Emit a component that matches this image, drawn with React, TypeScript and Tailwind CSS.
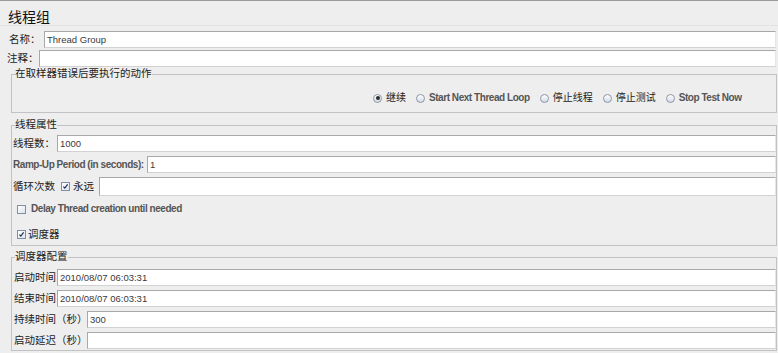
import React from "react";

const FONT = "font-['Liberation_Sans','Noto_Sans_CJK_SC',sans-serif]";
const CJK = "text-[10.5px] text-[#222] leading-none whitespace-nowrap";
const EN = "text-[10px] font-bold tracking-[-0.45px] text-[#555] leading-none whitespace-nowrap";

function Field({ value = "", h = "h-[17px]" }: { value?: string; h?: string }) {
  return (
    <div
      className={`${h} flex-1 min-w-0 bg-white border border-[#a8a8a8] border-b-[#d2d2d2] border-r-[#e6e6e6] flex items-center pl-[2px] text-[9.5px] text-[#3a3a3a] leading-none whitespace-nowrap overflow-hidden`}
    >
      {value}
    </div>
  );
}

function Radio({ checked = false, label, en = false }: { checked?: boolean; label: string; en?: boolean }) {
  return (
    <div className="flex items-center gap-[4px]">
      <span className="w-[9px] h-[9px] rounded-full border border-[#8d97a5] bg-linear-to-b from-white to-[#d3dbe7] flex items-center justify-center">
        {checked && <span className="w-[4px] h-[4px] rounded-full bg-[#2b2b2b]" />}
      </span>
      <span className={en ? `${EN} text-[#333]` : "text-[10px] text-[#222] leading-none whitespace-nowrap"}>{label}</span>
    </div>
  );
}

function Check({ checked = false }: { checked?: boolean }) {
  return (
    <span className="w-[9px] h-[9px] shrink-0 border border-[#7f8fa4] bg-linear-to-br from-white to-[#dbe3ee] flex items-center justify-center">
      {checked && (
        <svg width="9" height="9" viewBox="0 0 9 9">
          <path d="M1.8 4.6 L3.6 6.6 L7.2 1.8" fill="none" stroke="#1e2d4d" strokeWidth="1.5" />
        </svg>
      )}
    </span>
  );
}

function Group({ title, className, children }: { title: string; className: string; children: React.ReactNode }) {
  return (
    <fieldset className={`ml-[11px] mr-[1px] border border-[#c2c2c2] ${className}`}>
      <legend className={`ml-[3px] ${CJK} leading-[12px] h-[12px]`}>{title}</legend>
      {children}
    </fieldset>
  );
}

export default function App() {
  return (
    <div className={`w-[778px] h-[353px] overflow-hidden bg-[#eeeeee] border-t border-[#9a9a9a] ${FONT} flex flex-col`}>
      <div className="h-[25px] pt-[8px] pl-[8px] border-b border-[#e2e2e2] text-[14px] leading-[16px] text-[#111]">
        线程组
      </div>

      <div className="mt-[5px] flex items-center pl-[9px] mr-[2px]">
        <span className={`${CJK} w-[35px]`}>名称：</span>
        <Field value="Thread Group" />
      </div>
      <div className="mt-[2px] flex items-center pl-[7px] mr-[2px]">
        <span className={`${CJK} w-[32px]`}>注释：</span>
        <Field />
      </div>

      <Group title="在取样器错误后要执行的动作" className="mt-[1px] h-[45px] pb-[8px]">
        <div className="mt-[12px] h-[12px] flex items-center pl-[361px] gap-[10px]">
          <Radio checked label="继续" />
          <Radio label="Start Next Thread Loop" en />
          <Radio label="停止线程" />
          <Radio label="停止测试" />
          <Radio label="Stop Test Now" en />
        </div>
      </Group>

      <Group title="线程属性" className="mt-[6px] h-[127px]">
        <div className="mt-[4px] flex items-center pl-[1px]">
          <span className={`${CJK} w-[44px]`}>线程数：</span>
          <Field value="1000" />
        </div>
        <div className="mt-[4px] flex items-center pl-[1px]">
          <span className={`${EN} w-[134px]`}>Ramp-Up Period (in seconds):</span>
          <Field value="1" />
        </div>
        <div className="mt-[4px] flex items-center pl-[1px]">
          <span className={`${CJK} w-[48px]`}>循环次数</span>
          <Check checked />
          <span className={`${CJK} ml-[3px] w-[26px]`}>永远</span>
          <Field h="h-[19px]" />
        </div>
        <div className="mt-[6px] h-[14px] flex items-center pl-[5px] gap-[5px]">
          <Check />
          <span className={EN}>Delay Thread creation until needed</span>
        </div>
        <div className="mt-[11px] h-[14px] flex items-center pl-[5px] gap-[2px]">
          <Check checked />
          <span className={CJK}>调度器</span>
        </div>
      </Group>

      <Group title="调度器配置" className="mt-[5px] h-[100px]">
        <div className="mt-[6px] flex items-center pl-[2px]">
          <span className={`${CJK} w-[43px]`}>启动时间</span>
          <Field value="2010/08/07 06:03:31" />
        </div>
        <div className="mt-[4px] flex items-center pl-[2px]">
          <span className={`${CJK} w-[43px]`}>结束时间</span>
          <Field value="2010/08/07 06:03:31" />
        </div>
        <div className="mt-[4px] flex items-center pl-[2px]">
          <span className={`${CJK} w-[73px]`}>持续时间（秒）</span>
          <Field value="300" />
        </div>
        <div className="mt-[4px] flex items-center pl-[2px]">
          <span className={`${CJK} w-[73px]`}>启动延迟（秒）</span>
          <Field />
        </div>
      </Group>
    </div>
  );
}
